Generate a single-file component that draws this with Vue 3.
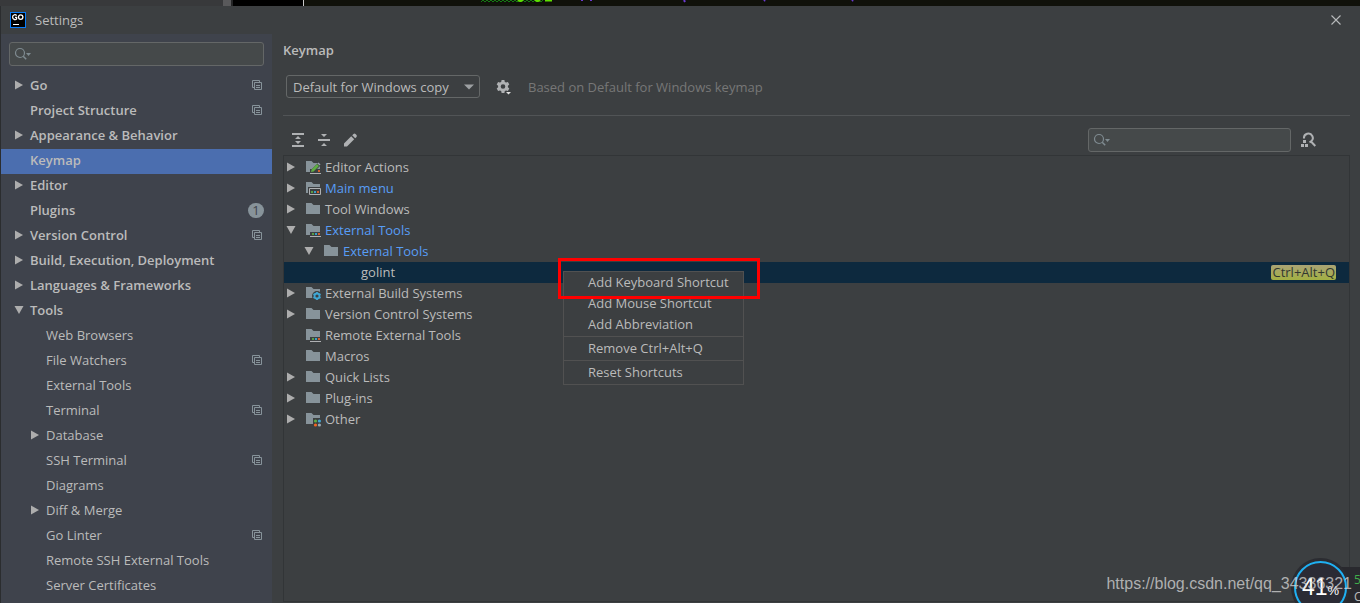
<script setup>
import { ref } from 'vue'

const sidebar = [
  { label: 'Go', arrow: 'right', top: true, copy: true },
  { label: 'Project Structure', top: true, copy: true },
  { label: 'Appearance & Behavior', arrow: 'right', top: true },
  { label: 'Keymap', top: true, selected: true },
  { label: 'Editor', arrow: 'right', top: true },
  { label: 'Plugins', top: true, badge: 1 },
  { label: 'Version Control', arrow: 'right', top: true, copy: true },
  { label: 'Build, Execution, Deployment', arrow: 'right', top: true },
  { label: 'Languages & Frameworks', arrow: 'right', top: true },
  { label: 'Tools', arrow: 'down', top: true },
  { label: 'Web Browsers' },
  { label: 'File Watchers', copy: true },
  { label: 'External Tools' },
  { label: 'Terminal', copy: true },
  { label: 'Database', arrow: 'right' },
  { label: 'SSH Terminal', copy: true },
  { label: 'Diagrams' },
  { label: 'Diff & Merge', arrow: 'right' },
  { label: 'Go Linter', copy: true },
  { label: 'Remote SSH External Tools' },
  { label: 'Server Certificates' },
]

const actions = [
  { label: 'Editor Actions', arrow: 'right', icon: 'editor' },
  { label: 'Main menu', arrow: 'right', icon: 'menu', changed: true },
  { label: 'Tool Windows', arrow: 'right', icon: 'plain' },
  { label: 'External Tools', arrow: 'down', icon: 'tools', changed: true },
  { label: 'External Tools', arrow: 'down', icon: 'plain', changed: true, level: 1 },
  { label: 'golint', level: 2, selected: true, shortcut: 'Ctrl+Alt+Q' },
  { label: 'External Build Systems', arrow: 'right', icon: 'build' },
  { label: 'Version Control Systems', arrow: 'right', icon: 'plain' },
  { label: 'Remote External Tools', icon: 'tools' },
  { label: 'Macros', icon: 'plain' },
  { label: 'Quick Lists', arrow: 'right', icon: 'plain' },
  { label: 'Plug-ins', arrow: 'right', icon: 'plain' },
  { label: 'Other', arrow: 'right', icon: 'other' },
]

const menuGroups = [
  ['Add Keyboard Shortcut', 'Add Mouse Shortcut', 'Add Abbreviation'],
  ['Remove Ctrl+Alt+Q'],
  ['Reset Shortcuts'],
]

const scheme = ref('Default for Windows copy')
const settingsQuery = ref('')
const actionQuery = ref('')
</script>

<template>
  <div class="screen">
    <div class="backdrop" aria-hidden="true">
      <svg width="900" height="6" viewBox="0 0 900 6">
        <rect width="223" height="6" fill="#38393b" />
        <rect x="223" width="8" height="6" fill="#59595b" />
        <rect x="231" width="2" height="6" fill="#242526" />
        <rect x="233" width="70" height="6" fill="#000" />
        <rect x="303" width="1" height="6" fill="#c8c8c8" />
        <path d="M481 2l2-2 2 2 2-2 2 2 2-2 2 2 2-2 2 2 2-2 2 2 2-2 2 2 2-2 2 2 2-2 2 2 2-2 2 2 2-2 2 2 2-2 2 2 2-2 2 2 2-2 2 2 2-2 2 2 2-2 2 2 2-2" fill="none" stroke="#157a12" />
        <path d="M518 0q2 2 5 0M535 0q3 2 5 0M545 .5h7" fill="none" stroke="#5fe000" stroke-width="2" />
        <path d="M582 0v1M591 0v1M684 0l1 2M764 1l1-1M852 1l1-1" stroke="#6c3bd0" stroke-width="2" />
      </svg>
    </div>

    <div class="dialog">
      <header class="titlebar">
        <svg class="logo" width="16" height="16" viewBox="0 0 16 16" aria-hidden="true">
          <rect x=".5" y=".5" width="15" height="15" fill="#000" stroke="#087cfa" />
          <path d="M6.6 3.6C5.8 2.3 2.6 2.2 2.6 5.1S6 8 6.6 6.9V5.4H5" fill="none" stroke="#fff" stroke-width="1.3" />
          <ellipse cx="10.7" cy="5.1" rx="2.2" ry="2.3" fill="none" stroke="#fff" stroke-width="1.3" />
          <path d="M3 12.5h6" stroke="#fff" />
        </svg>
        <h1>Settings</h1>
        <button class="close" aria-label="Close">
          <svg width="12" height="12" viewBox="0 0 12 12"><path d="M1.5 1.5l9 9M10.5 1.5l-9 9" stroke="#b8babb" stroke-width="1.1" /></svg>
        </button>
      </header>

      <div class="body">
        <aside class="sidebar">
          <label class="search">
            <svg width="18" height="16" viewBox="0 0 18 16" aria-hidden="true">
              <circle cx="6" cy="7" r="4.5" fill="none" stroke="#7f8b91" stroke-width="1.2" />
              <path d="M9.2 10.300l3 3" stroke="#7f8b91" stroke-width="1.500" />
              <path d="M12 7h5l-2.500 3z" fill="#7f8b91" />
            </svg>
            <input v-model="settingsQuery" type="text" aria-label="Search settings" />
          </label>
          <nav class="nav">
            <a v-for="item in sidebar" :key="item.label" href="#" class="nav-row"
              :class="{ top: item.top, selected: item.selected }">
              <span class="twist">
                <svg v-if="item.arrow" width="10" height="10" viewBox="0 0 10 10" aria-hidden="true">
                  <path :d="item.arrow === 'right' ? 'M1 .5l8 4.500-8 4.500z' : 'M.5 1h9l-4.500 8z'" fill="#adadad" />
                </svg>
              </span>
              <span class="label">{{ item.label }}</span>
              <svg v-if="item.copy" class="copy" width="10" height="10" viewBox="0 0 10 10" aria-hidden="true">
                <path d="M2.500 7.500h-2v-7h7v2M2.500 2.500h7v7h-7zM4 5.500h4M4 7.500h4" fill="none" stroke="#87939a" />
              </svg>
              <span v-if="item.badge" class="badge">{{ item.badge }}</span>
            </a>
          </nav>
        </aside>

        <main class="content">
          <h2>Keymap</h2>
          <div class="scheme">
            <span class="select">
              <select v-model="scheme" aria-label="Keymap scheme">
                <option>Default for Windows copy</option>
              </select>
              <svg width="10" height="6" viewBox="0 0 10 6" aria-hidden="true"><path d="M0 .5h10l-5 5z" fill="#9da0a2" /></svg>
            </span>
            <button class="icon gear" aria-label="Scheme actions">
              <svg width="16" height="16" viewBox="0 0 16 16">
                <path fill="#afb1b3" fill-rule="evenodd" d="M5.600 1h2.800l.4 1.900 1.300.7 1.800-.6 1.400 2.400-1.400 1.300v1.600l1.400 1.300-1.400 2.400-1.800-.6-1.300.7-.4 1.900H5.600l-.4-1.900-1.300-.7-1.800.6L.7 9.600l1.400-1.300V6.700L.7 5.400 2.100 3l1.800.6 1.300-.7zM7 5.200a2.300 2.300 0 1 0 0 4.600 2.300 2.300 0 0 0 0-4.600z" />
                <path d="M9 12h7l-3.500 4z" fill="#3c3f41" />
                <path d="M10 13h5l-2.500 2.500z" fill="#e0e0e0" />
              </svg>
            </button>
            <span class="hint">Based on Default for Windows keymap</span>
          </div>

          <div class="toolbar">
            <button class="icon" aria-label="Expand all">
              <svg width="16" height="16" viewBox="0 0 16 16"><path d="M2 1h12v2H2zM2 13h12v2H2zM8 4l3 3H5zM8 12l3-3H5z" fill="#afb1b3" /></svg>
            </button>
            <button class="icon" aria-label="Collapse all">
              <svg width="16" height="16" viewBox="0 0 16 16"><path d="M2 7h12v2H2zM5 2h6L8 5zM5 14h6l-3-3z" fill="#afb1b3" /></svg>
            </button>
            <button class="icon" aria-label="Edit shortcut">
              <svg width="16" height="16" viewBox="0 0 16 16"><path d="M2 14.500V11.500l7.200-7.200 3 3L5 14.500zM10.200 3.300l1.300-1.300q1-.8 2 0l1 1q.8 1 0 2l-1.300 1.300z" fill="#afb1b3" /></svg>
            </button>
            <label class="search action-search">
              <svg width="18" height="16" viewBox="0 0 18 16" aria-hidden="true">
                <circle cx="6" cy="7" r="4.500" fill="none" stroke="#7f8b91" stroke-width="1.200" />
                <path d="M9.200 10.300l3 3" stroke="#7f8b91" stroke-width="1.500" />
                <path d="M12 7h5l-2.500 3z" fill="#7f8b91" />
              </svg>
              <input v-model="actionQuery" type="text" aria-label="Search actions" />
            </label>
            <button class="icon find" aria-label="Find actions by shortcut">
              <svg width="16" height="16" viewBox="0 0 16 16">
                <path d="M3 6.500a4.400 4.400 0 1 1 7 3l-1.500.8M10 9.500l4.300 4.500" fill="none" stroke="#afb1b3" stroke-width="2" />
                <path d="M2 8h3v3H2zM0 12h3v3H0zM4 12h3v3H4z" fill="#afb1b3" />
              </svg>
            </button>
          </div>

          <ul class="tree">
            <li v-for="(a, i) in actions" :key="i" class="tree-row"
              :class="[{ selected: a.selected, changed: a.changed }, 'level-' + (a.level || 0)]">
              <span class="twist">
                <svg v-if="a.arrow" width="10" height="10" viewBox="0 0 10 10" aria-hidden="true">
                  <path :d="a.arrow === 'right' ? 'M1 .5l8 4.500-8 4.500z' : 'M.5 1h9l-4.500 8z'" fill="#adadad" />
                </svg>
              </span>
              <svg class="folder" width="16" height="16" viewBox="0 0 16 16" aria-hidden="true">
                <template v-if="a.icon">
                  <path d="M1 13V2h5.500l2 2H15v9z" fill="#87939a" />
                  <template v-if="a.icon === 'tools' || a.icon === 'editor'">
                    <path d="M5 10h11v6H5z" fill="#3c3f41" />
                    <path d="M5 14h11v1H5z" fill="#afb1b3" />
                    <path d="M13 11h2v2h-2z" fill="#d25f2c" />
                  </template>
                  <template v-if="a.icon === 'tools'">
                    <path d="M7 11h2v2H7z" fill="#5a9e43" />
                    <path d="M10 11h2v2h-2z" fill="#3a9fc9" />
                  </template>
                  <template v-if="a.icon === 'editor'">
                    <path d="M6 14l1-4 7-7 3 2-8 8z" fill="#3c3f41" />
                    <path d="M6 13l.6-2.600L12 5l2 2-5.400 5.400z" fill="#5fad43" />
                    <path d="M12.500 4.500l1-1 2 2-1 1z" fill="#9aa7b0" />
                  </template>
                  <template v-if="a.icon === 'menu'">
                    <path d="M3 7h13v9H3z" fill="#3c3f41" />
                    <path d="M4.500 8.500h11v6h-11z" fill="#3c3f41" stroke="#afb1b3" />
                    <path d="M6 11h2v2H6z" fill="#5a9e43" />
                    <path d="M9 11h2v2H9z" fill="#3a9fc9" />
                    <path d="M12 11h2v2h-2z" fill="#d25f2c" />
                  </template>
                  <template v-if="a.icon === 'build'">
                    <circle cx="12" cy="11" r="5" fill="#3c3f41" />
                    <circle cx="12" cy="11" r="2.500" fill="none" stroke="#40a7d4" stroke-width="1.800" />
                    <path d="M12 7v1.500M12 13.500V15M8.500 9l1.300.8M14.200 12.200l1.300.8M8.500 13l1.300-.8M14.200 9.800l1.300-.8" stroke="#40a7d4" stroke-width="1.800" />
                  </template>
                  <template v-if="a.icon === 'other'">
                    <path d="M8 7h8v9H8z" fill="#3c3f41" />
                    <circle cx="10.500" cy="10" r="1.600" fill="#5fad43" />
                    <circle cx="14.400" cy="10" r="1.600" fill="#40a7d4" />
                    <circle cx="10.500" cy="14" r="1.600" fill="#f26522" />
                    <circle cx="14.400" cy="14" r="1.600" fill="#9aa7b0" />
                  </template>
                </template>
              </svg>
              <span class="label">{{ a.label }}</span>
              <kbd v-if="a.shortcut">{{ a.shortcut }}</kbd>
            </li>
          </ul>
        </main>
      </div>
    </div>

    <div class="menu" role="menu">
      <div v-for="(group, g) in menuGroups" :key="g" class="menu-group">
        <button v-for="entry in group" :key="entry" role="menuitem">{{ entry }}</button>
      </div>
    </div>
    <div class="callout"></div>

    <div class="net-panel" aria-hidden="true"><span class="up">5</span><span>C</span></div>
    <div class="ball"><span>41<small>%</small></span></div>
    <div class="watermark">https://blog.csdn.net/qq_34336321</div>
  </div>
</template>

<style>
body {
  background: #3c3f41;
}
</style>

<style scoped>
* {
  box-sizing: border-box;
}
.screen {
  position: relative;
  display: flex;
  flex-direction: column;
  height: 100vh;
  overflow: hidden;
  font: 13px/20px "Open Sans", "Noto Sans", sans-serif;
  color: #bbbbbb;
}
.backdrop {
  flex: none;
  height: 6px;
  overflow: hidden;
  background: #10110a;
}
.backdrop svg {
  display: block;
}
.dialog {
  flex: 1;
  min-height: 0;
  display: flex;
  flex-direction: column;
  border-left: 1px solid #2b2d2f;
  background: #3c3f41;
}
.titlebar {
  flex: none;
  display: flex;
  align-items: center;
  height: 28px;
  padding: 0 18px 0 9px;
}
h1 {
  margin: 0 auto 0 9px;
  font-size: 13px;
  font-weight: 400;
}
button {
  padding: 0;
  border: 0;
  background: none;
  font: inherit;
  color: inherit;
}
.close,
.icon {
  display: flex;
}
.body {
  flex: 1;
  min-height: 0;
  display: flex;
}
.sidebar {
  flex: none;
  width: 271px;
  padding-top: 8px;
  background: #3f434c;
}
.search {
  display: flex;
  align-items: center;
  height: 24px;
  margin: 0 8px;
  padding: 0 4px;
  border: 1px solid #646767;
  border-radius: 3px;
  background: #45494a;
}
.search input {
  flex: 1;
  min-width: 0;
  padding: 0;
  border: 0;
  outline: 0;
  background: none;
  color: inherit;
  font: inherit;
}
.nav {
  margin-top: 8px;
}
.nav-row {
  display: flex;
  align-items: center;
  height: 25px;
  padding: 0 10px 3px 29px;
  color: inherit;
  text-decoration: none;
}
.nav-row.top {
  padding-left: 13px;
  font-weight: 600;
}
.nav-row.selected {
  background: #4b6eaf;
}
.twist {
  flex: none;
  display: flex;
  width: 16px;
}
.nav .label {
  flex: 1;
}
.badge {
  width: 16px;
  height: 15px;
  margin-right: -2px;
  border-radius: 8px;
  background: #87939a;
  color: #3f434c;
  font-weight: 400;
  line-height: 15px;
  text-align: center;
}
.content {
  flex: 1;
  min-width: 0;
  display: flex;
  flex-direction: column;
  padding: 6px 10px 1px 11px;
}
h2 {
  margin: 0;
  font-size: 13px;
  font-weight: 600;
}
.scheme {
  display: flex;
  align-items: center;
  height: 56px;
  padding: 0 3px 2px;
  border-bottom: 1px solid #515456;
}
.select {
  display: grid;
  align-items: center;
  width: 194px;
  margin-right: 16px;
}
.select select,
.select svg {
  grid-area: 1 / 1;
}
.select select {
  appearance: none;
  height: 23px;
  padding: 0 24px 0 6px;
  border: 1px solid #646767;
  border-radius: 3px;
  background: #3c3f41;
  color: inherit;
  font: inherit;
}
.select svg {
  justify-self: end;
  margin-right: 6px;
  pointer-events: none;
}
.hint {
  margin-left: 16px;
  color: #777777;
}
.toolbar {
  display: flex;
  align-items: center;
  gap: 10px;
  height: 39px;
  padding: 9px 33px 0 7px;
}
.action-search {
  width: 203px;
  margin: 0 0 0 auto;
}
.tree {
  flex: 1;
  min-height: 0;
  margin: 0;
  padding: 1px 0 0;
  border: 1px solid #323537;
  list-style: none;
}
.tree-row {
  display: flex;
  align-items: center;
  height: 21px;
  padding: 0 13px 1px 2px;
}
.level-1 {
  padding-left: 20px;
}
.level-2 {
  padding-left: 38px;
}
.tree-row .twist {
  width: 19px;
}
.folder {
  margin-right: 4px;
}
.tree-row.changed .label {
  color: #589df6;
}
.tree-row.selected {
  background: #0d293e;
}
kbd {
  margin-left: auto;
  padding: 0 1px;
  border-radius: 2px;
  background: linear-gradient(#aaa375, #a3b043);
  color: #323830;
  font: inherit;
  line-height: 15px;
}
.menu {
  position: absolute;
  left: 563px;
  top: 271px;
  width: 181px;
  border: 1px solid #515151;
  background: #3c3f41;
}
.menu-group {
  padding-bottom: 1px;
}
.menu-group + .menu-group {
  padding-top: 1px;
  border-top: 1px solid #515151;
}
.menu button {
  display: block;
  width: 100%;
  height: 21px;
  padding: 0 0 1px 24px;
  text-align: left;
}
.callout {
  position: absolute;
  left: 558px;
  top: 258px;
  width: 202px;
  height: 41px;
  border: 3px solid #ff0000;
}
.net-panel {
  position: absolute;
  right: 0;
  bottom: 0;
  width: 40px;
  height: 36px;
  padding: 4px 0 0 34px;
  overflow: hidden;
  background: #29292e;
  font-size: 12px;
  line-height: 17px;
}
.net-panel span {
  display: block;
}
.net-panel .up {
  color: #3fae4a;
}
.ball {
  position: absolute;
  right: 13px;
  bottom: -11px;
  width: 53px;
  height: 53px;
  border: 2px solid #1fb0f2;
  border-radius: 50%;
  background: #2b2b35;
  box-shadow: 0 0 0 3px #2b2c31;
  color: #fff;
  font: 23px/49px "Liberation Sans", sans-serif;
  text-align: center;
}
.ball small {
  font-size: 13px;
}
.watermark {
  position: absolute;
  right: 8px;
  bottom: 9px;
  color: rgba(215, 215, 215, 0.75);
  font: 16px/20px "Liberation Sans", Arial, sans-serif;
}
</style>
